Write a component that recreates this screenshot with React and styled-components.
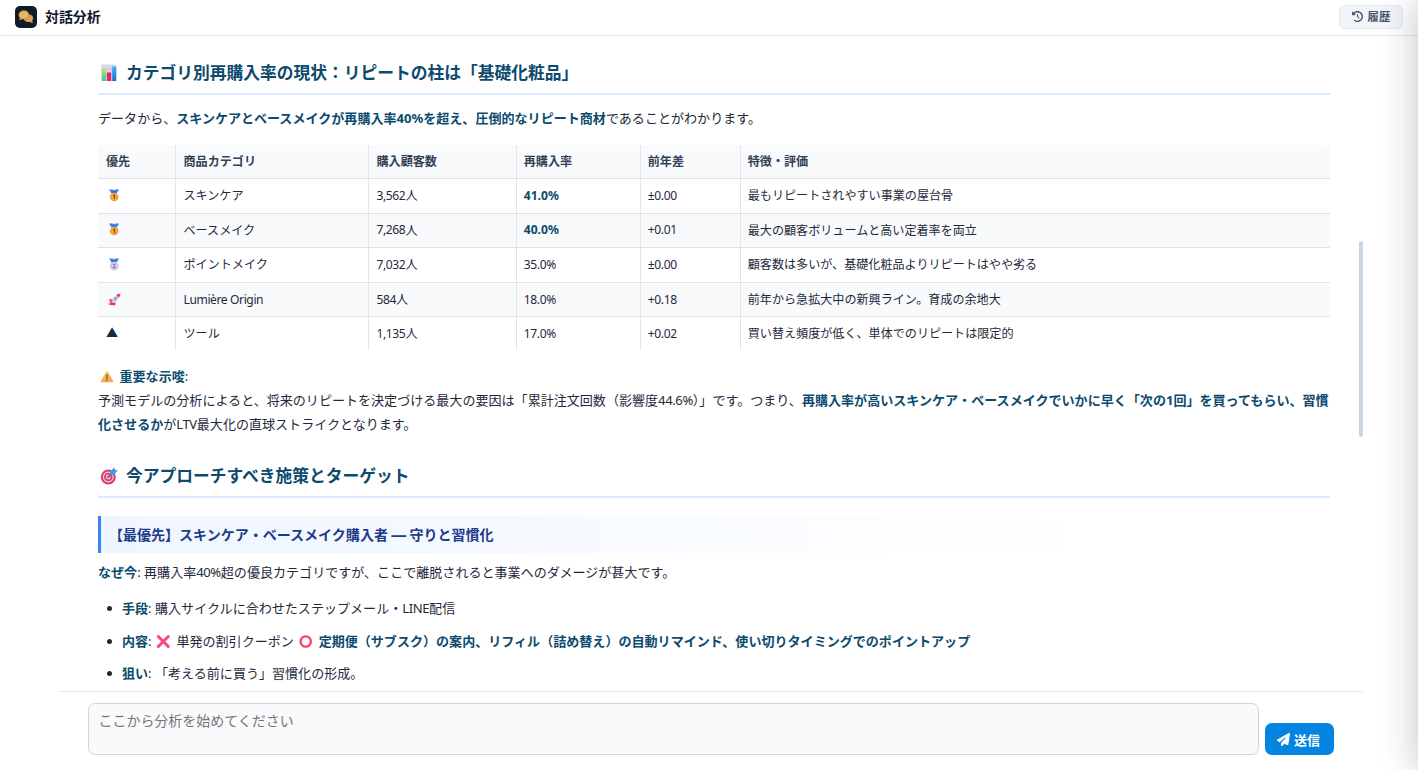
import React from "react";
import styled, { createGlobalStyle } from "styled-components";
import { FaClockRotateLeft, FaPaperPlane } from "react-icons/fa6";

const GlobalStyle = createGlobalStyle`
  *, *::before, *::after { box-sizing: border-box; }
  html, body { margin: 0; height: 100%; overflow: hidden; background: #fff; }
  body, button, textarea {
    font-family: "Noto Sans", "Noto Sans CJK JP", sans-serif;
  }
`;

const Page = styled.div`
  display: flex;
  flex-direction: column;
  width: 100vw;
  height: 100vh;
  color: #1e293b;
`;

const Header = styled.header`
  flex: none;
  display: flex;
  align-items: center;
  justify-content: space-between;
  height: 36px;
  padding: 0 15px 2px;
  border-bottom: 1px solid #e5e7eb;
`;

const Brand = styled.div`
  display: flex;
  align-items: center;
  gap: 8px;
`;

const Logo = styled.span`
  display: flex;
  align-items: center;
  justify-content: center;
  width: 22px;
  height: 22px;
  border-radius: 5px;
  background: #0f1c28;
`;

const Title = styled.h1`
  margin: 0;
  font-size: 13.9px;
  line-height: 22px;
  font-weight: 700;
  color: #0f172a;
`;

const HistoryButton = styled.button`
  display: flex;
  align-items: center;
  justify-content: center;
  gap: 5px;
  width: 64px;
  height: 24px;
  padding: 0 0 1px;
  border: 1px solid #e2e8f0;
  border-radius: 6px;
  background: #f1f5f9;
  color: #475569;
  font-size: 11.4px;
  font-weight: 600;
`;

const Body = styled.div`
  flex: 1;
  min-height: 0;
  display: flex;
  flex-direction: column;
  padding: 0 55px 0 58px;
`;

const Scroller = styled.main`
  flex: 1;
  min-height: 0;
  display: flex;
  justify-content: space-between;
  overflow: hidden;
  padding-left: 40px;
`;

const Article = styled.article`
  width: 1232px;
`;

const ScrollThumb = styled.div`
  width: 4px;
  height: 196px;
  margin-top: 205px;
  border-radius: 2px;
  background: #cbd5e1;
`;

const SectionTitle = styled.h2`
  display: flex;
  align-items: center;
  gap: 6px;
  height: 36px;
  margin: ${(p) => p.$top}px 0 0;
  padding: 0 0 6px 1px;
  border-bottom: 2px solid #dbeafe;
  font-size: 16.75px;
  line-height: 28px;
  font-weight: 600;
  color: #0c4a6e;
`;

const Paragraph = styled.p`
  margin: ${(p) => p.$top}px 0 0;
  font-size: 13.055px;
  line-height: 24px;
`;

const Strong = styled.strong`
  font-weight: 700;
  color: #0c4a6e;
`;

const Latin = styled.span`
  letter-spacing: -0.4px;
`;

const Inline = styled.span`
  display: inline-flex;
  vertical-align: -3px;
  margin: ${(p) => p.$margin || "0"};
`;

const Table = styled.div`
  margin-top: 15px;
  border-radius: 4px 4px 0 0;
  overflow: hidden;
  font-size: 12.08px;
  color: #1e293b;
`;

const Row = styled.div`
  display: grid;
  grid-template-columns: 78px 193px 148px 124px 100px 1fr;
  height: ${(p) => p.$height}px;
  background: ${(p) => (p.$shaded ? "#f8fafc" : "#fff")};
  border-bottom: ${(p) => (p.$last ? "none" : "1px solid #dfe1e3")};
  font-weight: ${(p) => (p.$head ? 600 : 400)};
  color: ${(p) => (p.$head ? "#334155" : "inherit")};
`;

const Cell = styled.div`
  display: flex;
  align-items: center;
  padding: 0 8px ${(p) => p.$lift || 1}px;
  white-space: nowrap;
  & + & { padding-left: 7.5px; }
  &&:nth-child(n + 4) { padding-left: 6.8px; }
  &:not(:last-child) { border-right: 1px solid #e2e4e6; }
`;

const Callout = styled.h3`
  display: flex;
  align-items: center;
  height: 37px;
  margin: 18px 0 0;
  padding: 0 0 2px 8px;
  border-left: 3px solid #3b82f6;
  background: linear-gradient(90deg, #eff6ff, #ffffff 80%);
  font-size: 14.02px;
  font-weight: 600;
  color: #1e3a8a;
`;

const Dash = styled.span`
  margin: 0 2.8px;
  font-size: 16px;
  line-height: 18px;
  font-weight: 700;
`;

const List = styled.ul`
  display: flex;
  flex-direction: column;
  gap: 8.5px;
  margin: 12px 0 0;
  padding: 0;
  list-style: none;
  font-size: 13.05px;
  line-height: 24px;
`;

const Item = styled.li`
  display: flex;
  align-items: center;
  height: 24px;
  &::before {
    content: "";
    width: 5px;
    height: 5px;
    margin: 1px 10px 0 9px;
    border-radius: 50%;
    background: #1e293b;
  }
`;

const Composer = styled.footer`
  flex: none;
  display: flex;
  align-items: flex-end;
  gap: 6px;
  height: 79px;
  padding: 0 29.5px 15px 30px;
  border-top: 1px solid #e5e7eb;
`;

const Prompt = styled.textarea`
  display: block;
  flex: 1;
  height: 52px;
  padding: 6px 9.5px;
  border: 1px solid #d1d5db;
  border-radius: 7px;
  background: #f8fafc;
  font-size: 13.98px;
  line-height: 22px;
  resize: none;
  outline: none;
  &::placeholder { color: #757575; }
`;

const SendButton = styled.button`
  display: flex;
  align-items: center;
  justify-content: center;
  gap: 4px;
  width: 69px;
  height: 32px;
  padding: 1px 1px 0 0;
  border: 0;
  border-radius: 7px;
  background: #0284e0;
  color: #fff;
  font-size: 13px;
  font-weight: 700;
`;

const Drawer = styled.aside`
  position: fixed;
  top: 0;
  left: 100%;
  width: 320px;
  height: 100%;
  background: #fff;
  box-shadow: -4px 0 32px rgba(15, 23, 42, 0.22);
`;

const ChatIcon = () => (
  <svg width="16" height="14" viewBox="0 0 16 14">
    <path d="M10.400 4.300c2.800 0 4.700 1.700 4.700 3.900 0 1-.3 1.800-.9 2.500.1.900.3 1.600.8 2.300-1.200 0-2.100-.4-2.900-1.100-.5.100-1.100.200-1.700.200-2.700 0-4.700-1.700-4.700-3.900s2-3.900 4.700-3.900z" fill="#dca05a" />
    <path d="M5.900.6c3 0 5.200 1.900 5.200 4.300s-2.200 4.300-5.200 4.300c-.7 0-1.300-.1-1.900-.3-.8.600-1.800 1-3 1 .5-.600.7-1.300.8-2.200C1.100 6.900.7 6 .7 4.900.7 2.500 2.900.6 5.900.6z" fill="#e8b461" stroke="#6d512f" strokeWidth=".4" />
  </svg>
);

const ChartIcon = () => (
  <svg width="21" height="20" viewBox="0 0 21 20">
    <defs>
      <linearGradient id="bar-green" x2="0" y2="1"><stop stopColor="#b5ec63" /><stop offset="1" stopColor="#36c98a" /></linearGradient>
      <linearGradient id="bar-blue" x2="0" y2="1"><stop stopColor="#36b3f3" /><stop offset="1" stopColor="#2866d3" /></linearGradient>
    </defs>
    <rect x="2" y="1.500" width="15.500" height="16.500" rx="1.500" fill="#dcd5e4" />
    <path d="M2 6.500h15.500M2 12.500h15.500" stroke="#c6bed2" strokeWidth=".6" />
    <rect x="3" y="5.500" width="3.800" height="12.500" fill="url(#bar-green)" />
    <rect x="7.800" y="9.500" width="4.400" height="8.500" fill="#df2867" />
    <rect x="13.200" y="3.500" width="4" height="14.500" fill="url(#bar-blue)" />
  </svg>
);

const TargetIcon = () => (
  <svg width="21" height="20" viewBox="0 0 21 20">
    <circle cx="9.300" cy="11" r="7.500" fill="#dd3b68" />
    <circle cx="9.300" cy="11" r="5.400" fill="#f3dce8" />
    <circle cx="9.300" cy="11" r="4.300" fill="#dd3b68" />
    <circle cx="9.300" cy="11" r="2.400" fill="#f3dce8" />
    <circle cx="9.300" cy="11" r="1.200" fill="#dd3b68" />
    <path d="M9.300 11l6-6" stroke="#3168ad" strokeWidth="1.500" />
    <path d="M11 6l4.200-4.800.8 2.500 2.700.8-4.200 4.500-3.200-.3z" fill="#3e9ee8" />
  </svg>
);

const MedalIcon = ({ rank }) => (
  <svg width="16" height="15" viewBox="0 0 16 15">
    <path d="M3 1.600h3.700L8 2.600l1.300-1h3.900l-2.700 4h-5z" fill="#3485ee" />
    <path d="M6.500 3.200h3L8 5z" fill="#2364c4" />
    <circle cx="8.200" cy="9" r="4.300" fill={rank === 1 ? "#f59b35" : "#cdbfe4"} />
    <circle cx="8.200" cy="9" r="3" fill={rank === 1 ? "#f7a743" : "#d9cdec"} />
    {rank === 1 ? (
      <path d="M7.300 8l1.200-.8v3.700" fill="none" stroke="#7c4635" strokeWidth="1.100" />
    ) : (
      <path d="M7 8c.3-1 2.100-.8 1.900.3-.1.800-1.300 1.300-1.900 2.400h2.500" fill="none" stroke="#72608f" strokeWidth="1" />
    )}
  </svg>
);

const RocketIcon = () => (
  <svg width="16" height="15" viewBox="0 0 16 15">
    <path d="M2.600 13.300c0-1.700.6-2.900 1.700-3.300l1.500 1.600c-.5 1.100-1.500 1.700-3.200 1.700z" fill="#f9962f" />
    <path d="M2.800 7.600l3.400-.4-.4 2.500 1.300 1.300 2.500-.5-.4 3-2.600-.5-2.300.3.500-2.600z" fill="#ea2e67" />
    <path d="M5.200 9.500c.9-3.200 3.500-5.800 7.300-7.100.900.300 1.100.8 1.100 1.400-1.200 3.500-3.600 5.900-6.900 7.100z" fill="#cbc0dc" />
    <path d="M10.300 3c1-.9 2.400-1.300 4.100-1.400 0 1.500-.4 2.700-1.200 4z" fill="#f2396b" />
    <circle cx="9.400" cy="6.500" r="1.300" fill="#7ba5dc" />
  </svg>
);

const WarningIcon = () => (
  <svg width="16" height="15" viewBox="0 0 16 15">
    <defs>
      <linearGradient id="warn" x2="0" y2="1"><stop stopColor="#f8c84d" /><stop offset="1" stopColor="#f7a050" /></linearGradient>
    </defs>
    <path d="M7.100 2.800c.5-.8 1.400-.8 1.900 0l5.100 9.200c.4.700 0 1.300-.8 1.300H2.700c-.8 0-1.200-.6-.8-1.300z" fill="url(#warn)" />
    <path d="M8 6v3.300" stroke="#6a5344" strokeWidth="1.300" strokeLinecap="round" />
    <circle cx="8" cy="11.300" r=".8" fill="#6a5344" />
  </svg>
);

const CrossIcon = () => (
  <svg width="18" height="15" viewBox="0 0 18 15">
    <path d="M3.300 2.500l10 10M13.300 2.500l-10 10" stroke="#f9467c" strokeWidth="3" strokeLinecap="round" />
  </svg>
);

const CircleIcon = () => (
  <svg width="18" height="15" viewBox="0 0 18 15">
    <circle cx="8.700" cy="7.500" r="5.100" fill="none" stroke="#f64269" strokeWidth="2.400" />
  </svg>
);

const rows = [
  { icon: <MedalIcon rank={1} />, name: "スキンケア", count: "3,562", rate: "41.0%", strong: true, diff: "±0.00", note: "最もリピートされやすい事業の屋台骨", height: 35, lift: 2 },
  { icon: <MedalIcon rank={1} />, name: "ベースメイク", count: "7,268", rate: "40.0%", strong: true, diff: "+0.01", note: "最大の顧客ボリュームと高い定着率を両立", height: 34, lift: 2 },
  { icon: <MedalIcon rank={2} />, name: "ポイントメイク", count: "7,032", rate: "35.0%", diff: "±0.00", note: "顧客数は多いが、基礎化粧品よりリピートはやや劣る", height: 35, lift: 2 },
  { icon: <RocketIcon />, name: <Latin>Lumière Origin</Latin>, count: "584", rate: "18.0%", diff: "+0.18", note: "前年から急拡大中の新興ライン。育成の余地大", height: 34, lift: 1 },
  { icon: "▲", name: "ツール", count: "1,135", rate: "17.0%", diff: "+0.02", note: "買い替え頻度が低く、単体でのリピートは限定的", height: 33, lift: 1 },
];

const headings = ["優先", "商品カテゴリ", "購入顧客数", "再購入率", "前年差", "特徴・評価"];

export default function App() {
  return (
    <Page>
      <GlobalStyle />
      <Header>
        <Brand>
          <Logo><ChatIcon /></Logo>
          <Title>対話分析</Title>
        </Brand>
        <HistoryButton><FaClockRotateLeft size={11} />履歴</HistoryButton>
      </Header>
      <Body>
        <Scroller>
          <Article>
            <SectionTitle $top={23}>
              <ChartIcon />
              カテゴリ別再購入率の現状：リピートの柱は「基礎化粧品」
            </SectionTitle>
            <Paragraph $top={11}>
              データから、<Strong>スキンケアとベースメイクが再購入率40%を超え、圧倒的なリピート商材</Strong>であることがわかります。
            </Paragraph>
            <Table>
              <Row $head $shaded $height={34}>
                {headings.map((h) => <Cell key={h} $lift={2}>{h}</Cell>)}
              </Row>
              {rows.map((r, i) => (
                <Row key={i} $shaded={i % 2 === 1} $last={i === rows.length - 1} $height={r.height}>
                  <Cell $lift={r.lift}>{r.icon}</Cell>
                  <Cell $lift={r.lift}>{r.name}</Cell>
                  <Cell $lift={r.lift}><Latin>{r.count}</Latin>人</Cell>
                  <Cell $lift={r.lift}>{r.strong ? <Strong>{r.rate}</Strong> : <Latin>{r.rate}</Latin>}</Cell>
                  <Cell $lift={r.lift}><Latin>{r.diff}</Latin></Cell>
                  <Cell $lift={r.lift}>{r.note}</Cell>
                </Row>
              ))}
            </Table>
            <Paragraph $top={14}>
              <Inline $margin="0 4.5px 0 1px"><WarningIcon /></Inline>
              <Strong>重要な示唆</Strong>:<br />
              予測モデルの分析によると、将来のリピートを決定づける最大の要因は「累計注文回数（影響度<Latin>44.6%</Latin>）」です。つまり、<Strong>再購入率が高いスキンケア・ベースメイクでいかに早く「次の1回」を買ってもらい、習慣化させるか</Strong>が<Latin>LTV</Latin>最大化の直球ストライクとなります。
            </Paragraph>
            <SectionTitle $top={26}>
              <TargetIcon />
              今アプローチすべき施策とターゲット
            </SectionTitle>
            <Callout>【最優先】スキンケア・ベースメイク購入者<Dash>—</Dash>守りと習慣化</Callout>
            <Paragraph $top={7}>
              <Strong>なぜ今</Strong>: 再購入率<Latin>40%</Latin>超の優良カテゴリですが、ここで離脱されると事業へのダメージが甚大です。
            </Paragraph>
            <List>
              <Item><span><Strong>手段</Strong>: 購入サイクルに合わせたステップメール・<Latin>LINE</Latin>配信</span></Item>
              <Item>
                <span>
                  <Strong>内容</Strong>: <Inline><CrossIcon /></Inline> 単発の割引クーポン <Inline><CircleIcon /></Inline> <Strong>定期便（サブスク）の案内、リフィル（詰め替え）の自動リマインド、使い切りタイミングでのポイントアップ</Strong>
                </span>
              </Item>
              <Item><span><Strong>狙い</Strong>: 「考える前に買う」習慣化の形成。</span></Item>
            </List>
          </Article>
          <ScrollThumb />
        </Scroller>
        <Composer>
          <Prompt placeholder="ここから分析を始めてください" />
          <SendButton><FaPaperPlane size={13} />送信</SendButton>
        </Composer>
      </Body>
      <Drawer />
    </Page>
  );
}
